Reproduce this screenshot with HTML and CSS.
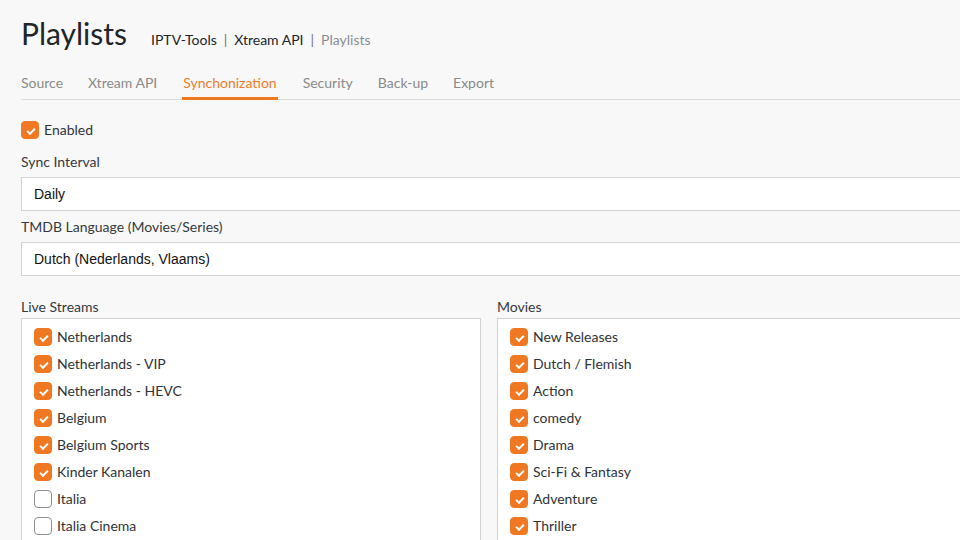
FILE: index.html
```html
<!DOCTYPE html>
<html>
<head>
<meta charset="utf-8">
<link rel="stylesheet" href="styles.css">
</head>
<body>
<div class="page">
  <header class="head">
    <h1 class="title">Playlists</h1>
    <nav class="crumbs"><span>IPTV-Tools</span><span class="sep">|</span><span>Xtream API</span><span class="sep">|</span><span class="muted">Playlists</span></nav>
  </header>
  <div class="tabs">
    <span class="tab">Source</span>
    <span class="tab">Xtream API</span>
    <span class="tab active">Synchonization</span>
    <span class="tab">Security</span>
    <span class="tab">Back-up</span>
    <span class="tab">Export</span>
  </div>
  <label class="check-row enabled"><span class="box on"></span>Enabled</label>
  <div class="field">
    <div class="label">Sync Interval</div>
    <div class="select">Daily</div>
  </div>
  <div class="field">
    <div class="label">TMDB Language (Movies/Series)</div>
    <div class="select">Dutch (Nederlands, Vlaams)</div>
  </div>
  <div class="cols">
    <div class="col">
      <div class="label">Live Streams</div>
      <div class="list">
        <label class="check-row"><span class="box on"></span>Netherlands</label>
        <label class="check-row"><span class="box on"></span>Netherlands - VIP</label>
        <label class="check-row"><span class="box on"></span>Netherlands - HEVC</label>
        <label class="check-row"><span class="box on"></span>Belgium</label>
        <label class="check-row"><span class="box on"></span>Belgium Sports</label>
        <label class="check-row"><span class="box on"></span>Kinder Kanalen</label>
        <label class="check-row"><span class="box"></span>Italia</label>
        <label class="check-row"><span class="box"></span>Italia Cinema</label>
      </div>
    </div>
    <div class="col">
      <div class="label">Movies</div>
      <div class="list">
        <label class="check-row"><span class="box on"></span>New Releases</label>
        <label class="check-row"><span class="box on"></span>Dutch / Flemish</label>
        <label class="check-row"><span class="box on"></span>Action</label>
        <label class="check-row"><span class="box on"></span>comedy</label>
        <label class="check-row"><span class="box on"></span>Drama</label>
        <label class="check-row"><span class="box on"></span>Sci-Fi &amp; Fantasy</label>
        <label class="check-row"><span class="box on"></span>Adventure</label>
        <label class="check-row"><span class="box on"></span>Thriller</label>
      </div>
    </div>
  </div>
</div>
</body>
</html>
```
FILE: styles.css
```css
html, body {
  margin: 0;
  padding: 0;
  background: #f8f8f8;
  overflow: hidden;
}
body {
  font-family: "Lato", "Noto Sans", sans-serif;
  color: #343a40;
  font-size: 14px;
}
.page {
  width: 1420px;
  padding: 0 0 0 21px;
}
.head {
  display: flex;
  align-items: baseline;
  padding-top: 15px;
  height: 45px;
}
.title {
  margin: 0;
  font-weight: 400;
  font-size: 30px;
  color: #212529;
  line-height: 36px;
}
.crumbs {
  margin-left: 24px;
  font-size: 14px;
  color: #212529;
  display: flex;
  gap: 7px;
}
.crumbs .sep { color: #6c757d; }
.crumbs .muted { color: #8a8f94; }
.tabs {
  display: flex;
  gap: 25px;
  border-bottom: 1px solid #dcdcdc;
  margin-top: 11px;
  height: 29px;
  box-sizing: border-box;
  font-size: 14px;
}
.tab {
  color: #8a8a8a;
  line-height: 24px;
  height: 29px;
  box-sizing: border-box;
}
.tab.active {
  color: #ef7c2c;
  border-bottom: 3px solid #f07820;
  padding: 0 1px;
}
.check-row {
  display: flex;
  align-items: center;
  gap: 5px;
  height: 27px;
  font-size: 14px;
  color: #2f3338;
}
.box {
  width: 16px;
  height: 16px;
  border: 1px solid #8d8d8d;
  border-radius: 4px;
  background: #fff;
  flex: none;
  position: relative;
}
.box.on {
  background: #f07823;
  border-color: #f07823;
}
.box.on::after {
  content: "";
  position: absolute;
  left: 5px;
  top: 6px;
  width: 6px;
  height: 3px;
  border-left: 2px solid #fff;
  border-bottom: 2px solid #fff;
  transform: rotate(-45deg);
  transform-origin: center;
}
.enabled {
  margin-top: 16px;
  margin-bottom: 11px;
}
.field {
  margin-top: 8px;
}
.label {
  font-size: 14px;
  color: #343a40;
  line-height: 16px;
  margin-bottom: 7px;
}
.select {
  height: 34px;
  box-sizing: border-box;
  border: 1px solid #d2d2d2;
  background: #fff;
  font-family: "Liberation Sans", Arial, sans-serif;
  font-size: 14px;
  color: #111;
  padding: 0 12px;
  line-height: 32px;
}
.cols {
  display: grid;
  grid-template-columns: 460px 700px;
  gap: 16px;
  margin-top: 23px;
}
.col .label { margin-bottom: 3px; }
.list {
  background: #fff;
  border: 1px solid #d2d2d2;
  height: 260px;
  padding: 4px 12px;
}
```
